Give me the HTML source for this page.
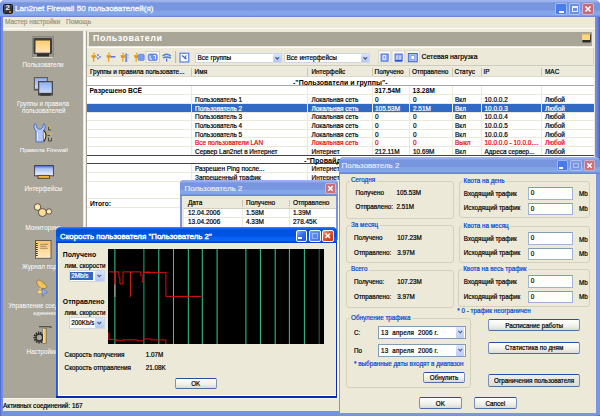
<!DOCTYPE html>
<html><head><meta charset="utf-8">
<style>
*{margin:0;padding:0;box-sizing:border-box}
html,body{width:600px;height:416px;overflow:hidden;background:#fff;font-family:"Liberation Sans",sans-serif;color:#000}
.a{position:absolute}
.t{position:absolute;white-space:nowrap;line-height:1;-webkit-text-stroke:0.2px currentColor}
</style></head><body>
<div class="a" style="left:0px;top:0px;width:600px;height:416px;background:linear-gradient(90deg,#4d5fcf,#6f8de0 1.5px,#7391e2 3px,#7391e2 595px,#6a80da 597.5px,#4a58c6 600px);border-radius:5px 5px 0 0"></div>
<div class="a" style="left:0px;top:0px;width:600px;height:16.8px;background:linear-gradient(#a2b6ee,#9ab0ea 10%,#7896e0 17%,#7896e0 60%,#82a6e8 66%,#82a6e8 90%,#6a84e0 94%);border-radius:5px 5px 0 0"></div>
<div class="a" style="left:3px;top:4px;width:10px;height:10px;background:linear-gradient(135deg,#555,#222);border-radius:1.5px;border:0.5px solid #1a1a1a"></div>
<div class="t" style="left:5.4px;top:4.34px;font-size:8px;font-weight:bold;-webkit-text-stroke:0;color:#f4f4f4">2</div>
<div class="a" style="left:9.3px;top:10.6px;width:2.2px;height:2.2px;background:#f0a020;border-radius:1px"></div>
<div class="t" style="left:15px;top:4.92px;font-size:8.1px;color:#f2f5fd;-webkit-text-stroke:0.35px #f2f5fd">Lan2net Firewall 50 пользователей(я)</div>
<div class="a" style="left:555px;top:3px;width:11.5px;height:11.5px;background:#4a7cec;border:1px solid rgba(220,230,255,.6);border-radius:2px"></div>
<div class="a" style="left:568.5px;top:3px;width:11.5px;height:11.5px;background:#6a8fe8;border:1px solid rgba(220,230,255,.6);border-radius:2px"></div>
<div class="a" style="left:582px;top:3px;width:11.5px;height:11.5px;background:#c66a7a;border:1px solid rgba(220,230,255,.6);border-radius:2px"></div>
<div class="a" style="left:558.5px;top:10.5px;width:5px;height:2px;background:#fff"></div>
<div class="a" style="left:571.5px;top:6px;width:6px;height:5.5px;border:1px solid #e8eefc;border-top-width:2px"></div>
<svg class="a" style="left:582px;top:3px" width="12" height="12"><path d="M3.5 3.5L8.5 8.5M8.5 3.5L3.5 8.5" stroke="#fff" stroke-width="1.6"/></svg>
<div class="a" style="left:3px;top:16.5px;width:591.8px;height:13px;background:#ece9d8"></div>
<div class="t" style="left:5px;top:19.27px;font-size:6.5px;color:#97948a">Мастер настройки</div>
<div class="t" style="left:66px;top:19.27px;font-size:6.5px;color:#97948a">Помощь</div>
<div class="a" style="left:3px;top:28.2px;width:591.8px;height:1px;background:#fff"></div>
<div class="a" style="left:3px;top:29.2px;width:591.8px;height:381.6px;background:#ece9d8"></div>
<div class="a" style="left:3px;top:30.5px;width:79.5px;height:368px;background:#a9a598"></div>
<div class="a" style="left:84px;top:30.5px;width:1px;height:368px;background:#fff"></div>
<div class="a" style="left:86px;top:30.5px;width:1px;height:368px;background:#aca899"></div>
<div class="a" style="left:89px;top:31.5px;width:503px;height:14.5px;background:#aaa697"></div>
<div class="t" style="left:93px;top:33.79px;font-size:8.9px;font-weight:bold;-webkit-text-stroke:0;color:#fff;letter-spacing:0.55px">Пользователи</div>
<svg class="a" style="left:580px;top:32px" width="14" height="13" viewBox="580 32 14 13"><rect x="582" y="34.5" width="8.2" height="5.5" fill="#ffd77e"/><path d="M582 34.2 h2.2 M585.2 34.2 h2.2 M588.2 34.2 h2" stroke="#f5c060" stroke-width="1"/><rect x="582.4" y="40" width="7.8" height="2.6" fill="#2a2a2a" rx=".6"/><rect x="590.1" y="34.2" width="1" height="8" fill="#333"/></svg>
<div class="a" style="left:87px;top:47.3px;width:506px;height:1px;background:#fff"></div>
<div class="a" style="left:3px;top:398px;width:591.8px;height:12.8px;background:#ece9d8;border-top:1.5px solid #f4f3ee"></div>
<div class="t" style="left:3px;top:402.99px;font-size:6.4px;">Активных соединений: 167</div>
<div class="a" style="left:195px;top:52.5px;width:87px;height:10.5px;background:#fff;border:1px solid #cdd6e3"></div>
<div class="t" style="left:197.5px;top:54.53px;font-size:6.45px;">Все группы</div>
<div class="a" style="left:272.5px;top:53.5px;width:8.5px;height:8.5px;background:linear-gradient(#d8e4fb,#b4c8f4);border-radius:1px"></div>
<svg class="a" style="left:272.5px;top:53.5px" width="8.5" height="8.5"><path d="M2.4 3.25L4.25 5.05L6.1 3.25" fill="none" stroke="#4d6185" stroke-width="1.2"/></svg>
<div class="a" style="left:284px;top:52.5px;width:86px;height:10.5px;background:#fff;border:1px solid #cdd6e3"></div>
<div class="t" style="left:286.5px;top:54.53px;font-size:6.45px;">Все интерфейсы</div>
<div class="a" style="left:360.5px;top:53.5px;width:8.5px;height:8.5px;background:linear-gradient(#d8e4fb,#b4c8f4);border-radius:1px"></div>
<svg class="a" style="left:360.5px;top:53.5px" width="8.5" height="8.5"><path d="M2.4 3.25L4.25 5.05L6.1 3.25" fill="none" stroke="#4d6185" stroke-width="1.2"/></svg>
<div class="t" style="left:421.5px;top:54.41px;font-size:6.9px;">Сетевая нагрузка</div>
<div class="a" style="left:175px;top:51px;width:1px;height:12px;background:#c5c2b2"></div>
<div class="a" style="left:593px;top:48px;width:1px;height:16px;background:#d4d0c0"></div>
<div class="a" style="left:87px;top:66px;width:506.5px;height:332px;background:#fff"></div>
<div class="a" style="left:87px;top:65.2px;width:506.5px;height:1px;background:#cfccbd"></div>
<div class="a" style="left:87px;top:66.2px;width:506.5px;height:10.8px;background:#ebeadb;border-bottom:1px solid #dcd9ca"></div>
<div class="a" style="left:191.4px;top:68px;width:1px;height:8px;background:#c7c5b2"></div>
<div class="a" style="left:307.4px;top:68px;width:1px;height:8px;background:#c7c5b2"></div>
<div class="a" style="left:372px;top:68px;width:1px;height:8px;background:#c7c5b2"></div>
<div class="a" style="left:409.4px;top:68px;width:1px;height:8px;background:#c7c5b2"></div>
<div class="a" style="left:451.6px;top:68px;width:1px;height:8px;background:#c7c5b2"></div>
<div class="a" style="left:480.6px;top:68px;width:1px;height:8px;background:#c7c5b2"></div>
<div class="a" style="left:541.4px;top:68px;width:1px;height:8px;background:#c7c5b2"></div>
<div class="t" style="left:90px;top:69.28px;font-size:6.45px;">Группы и правила пользовате...</div>
<div class="t" style="left:194.6px;top:69.28px;font-size:6.45px;">Имя</div>
<div class="t" style="left:311.4px;top:69.28px;font-size:6.45px;">Интерфейс</div>
<div class="t" style="left:374.5px;top:69.28px;font-size:6.45px;">Получено</div>
<div class="t" style="left:412px;top:69.28px;font-size:6.45px;">Отправлено</div>
<div class="t" style="left:454.5px;top:69.28px;font-size:6.45px;">Статус</div>
<div class="t" style="left:483.5px;top:69.28px;font-size:6.45px;">IP</div>
<div class="t" style="left:545px;top:69.28px;font-size:6.45px;">MAC</div>
<div class="a" style="left:87px;top:85.4px;width:506.5px;height:1px;background:#a8a8a8"></div>
<div class="t" style="left:293px;top:79.49px;font-size:7.0px;font-weight:bold;-webkit-text-stroke:0;">-"Пользователи и группы"-</div>
<div class="a" style="left:87px;top:94.32000000000001px;width:506.5px;height:1px;background:#ece9d8"></div>
<div class="a" style="left:191.4px;top:86.2px;width:1px;height:8.62px;background:#ece9d8"></div>
<div class="a" style="left:307.4px;top:86.2px;width:1px;height:8.62px;background:#ece9d8"></div>
<div class="a" style="left:372px;top:86.2px;width:1px;height:8.62px;background:#ece9d8"></div>
<div class="a" style="left:409.4px;top:86.2px;width:1px;height:8.62px;background:#ece9d8"></div>
<div class="a" style="left:451.6px;top:86.2px;width:1px;height:8.62px;background:#ece9d8"></div>
<div class="a" style="left:480.6px;top:86.2px;width:1px;height:8.62px;background:#ece9d8"></div>
<div class="a" style="left:541.4px;top:86.2px;width:1px;height:8.62px;background:#ece9d8"></div>
<div class="t" style="left:89.5px;top:88.14px;font-size:6.7px;font-weight:bold;-webkit-text-stroke:0;color:#000">Разрешено ВСЁ</div>
<div class="t" style="left:374.5px;top:88.14px;font-size:6.7px;font-weight:bold;-webkit-text-stroke:0;color:#000">317.54M</div>
<div class="t" style="left:412.5px;top:88.14px;font-size:6.7px;font-weight:bold;-webkit-text-stroke:0;color:#000">13.28M</div>
<div class="a" style="left:87px;top:102.94000000000001px;width:506.5px;height:1px;background:#ece9d8"></div>
<div class="a" style="left:191.4px;top:94.82000000000001px;width:1px;height:8.62px;background:#ece9d8"></div>
<div class="a" style="left:307.4px;top:94.82000000000001px;width:1px;height:8.62px;background:#ece9d8"></div>
<div class="a" style="left:372px;top:94.82000000000001px;width:1px;height:8.62px;background:#ece9d8"></div>
<div class="a" style="left:409.4px;top:94.82000000000001px;width:1px;height:8.62px;background:#ece9d8"></div>
<div class="a" style="left:451.6px;top:94.82000000000001px;width:1px;height:8.62px;background:#ece9d8"></div>
<div class="a" style="left:480.6px;top:94.82000000000001px;width:1px;height:8.62px;background:#ece9d8"></div>
<div class="a" style="left:541.4px;top:94.82000000000001px;width:1px;height:8.62px;background:#ece9d8"></div>
<div class="t" style="left:195px;top:97.20px;font-size:6.45px;color:#000">Пользователь 1</div>
<div class="t" style="left:311.5px;top:97.20px;font-size:6.45px;color:#000">Локальная сеть</div>
<div class="t" style="left:375px;top:97.20px;font-size:6.45px;color:#000">0</div>
<div class="t" style="left:413px;top:97.20px;font-size:6.45px;color:#000">0</div>
<div class="t" style="left:455px;top:97.20px;font-size:6.45px;color:#000">Вкл</div>
<div class="t" style="left:484.5px;top:97.20px;font-size:6.45px;color:#000">10.0.0.2</div>
<div class="t" style="left:545px;top:97.20px;font-size:6.45px;color:#000">Любой</div>
<div class="a" style="left:87px;top:103.64px;width:506.5px;height:8.219999999999999px;background:#316ac5"></div>
<div class="a" style="left:87px;top:111.56px;width:506.5px;height:1px;background:#ece9d8"></div>
<div class="a" style="left:191.4px;top:103.44px;width:1px;height:8.62px;background:#ece9d8"></div>
<div class="a" style="left:307.4px;top:103.44px;width:1px;height:8.62px;background:#ece9d8"></div>
<div class="a" style="left:372px;top:103.44px;width:1px;height:8.62px;background:#ece9d8"></div>
<div class="a" style="left:409.4px;top:103.44px;width:1px;height:8.62px;background:#ece9d8"></div>
<div class="a" style="left:451.6px;top:103.44px;width:1px;height:8.62px;background:#ece9d8"></div>
<div class="a" style="left:480.6px;top:103.44px;width:1px;height:8.62px;background:#ece9d8"></div>
<div class="a" style="left:541.4px;top:103.44px;width:1px;height:8.62px;background:#ece9d8"></div>
<div class="t" style="left:195px;top:105.82px;font-size:6.45px;color:#fff">Пользователь 2</div>
<div class="t" style="left:311.5px;top:105.82px;font-size:6.45px;color:#fff">Локальная сеть</div>
<div class="t" style="left:375px;top:105.82px;font-size:6.45px;color:#fff">105.53M</div>
<div class="t" style="left:413px;top:105.82px;font-size:6.45px;color:#fff">2.51M</div>
<div class="t" style="left:455px;top:105.82px;font-size:6.45px;color:#fff">Вкл</div>
<div class="t" style="left:484.5px;top:105.82px;font-size:6.45px;color:#fff">10.0.0.3</div>
<div class="t" style="left:545px;top:105.82px;font-size:6.45px;color:#fff">Любой</div>
<div class="a" style="left:87px;top:120.18px;width:506.5px;height:1px;background:#ece9d8"></div>
<div class="a" style="left:191.4px;top:112.06px;width:1px;height:8.62px;background:#ece9d8"></div>
<div class="a" style="left:307.4px;top:112.06px;width:1px;height:8.62px;background:#ece9d8"></div>
<div class="a" style="left:372px;top:112.06px;width:1px;height:8.62px;background:#ece9d8"></div>
<div class="a" style="left:409.4px;top:112.06px;width:1px;height:8.62px;background:#ece9d8"></div>
<div class="a" style="left:451.6px;top:112.06px;width:1px;height:8.62px;background:#ece9d8"></div>
<div class="a" style="left:480.6px;top:112.06px;width:1px;height:8.62px;background:#ece9d8"></div>
<div class="a" style="left:541.4px;top:112.06px;width:1px;height:8.62px;background:#ece9d8"></div>
<div class="t" style="left:195px;top:114.44px;font-size:6.45px;color:#000">Пользователь 3</div>
<div class="t" style="left:311.5px;top:114.44px;font-size:6.45px;color:#000">Локальная сеть</div>
<div class="t" style="left:375px;top:114.44px;font-size:6.45px;color:#000">0</div>
<div class="t" style="left:413px;top:114.44px;font-size:6.45px;color:#000">0</div>
<div class="t" style="left:455px;top:114.44px;font-size:6.45px;color:#000">Вкл</div>
<div class="t" style="left:484.5px;top:114.44px;font-size:6.45px;color:#000">10.0.0.4</div>
<div class="t" style="left:545px;top:114.44px;font-size:6.45px;color:#000">Любой</div>
<div class="a" style="left:87px;top:128.8px;width:506.5px;height:1px;background:#ece9d8"></div>
<div class="a" style="left:191.4px;top:120.68px;width:1px;height:8.62px;background:#ece9d8"></div>
<div class="a" style="left:307.4px;top:120.68px;width:1px;height:8.62px;background:#ece9d8"></div>
<div class="a" style="left:372px;top:120.68px;width:1px;height:8.62px;background:#ece9d8"></div>
<div class="a" style="left:409.4px;top:120.68px;width:1px;height:8.62px;background:#ece9d8"></div>
<div class="a" style="left:451.6px;top:120.68px;width:1px;height:8.62px;background:#ece9d8"></div>
<div class="a" style="left:480.6px;top:120.68px;width:1px;height:8.62px;background:#ece9d8"></div>
<div class="a" style="left:541.4px;top:120.68px;width:1px;height:8.62px;background:#ece9d8"></div>
<div class="t" style="left:195px;top:123.06px;font-size:6.45px;color:#000">Пользователь 4</div>
<div class="t" style="left:311.5px;top:123.06px;font-size:6.45px;color:#000">Локальная сеть</div>
<div class="t" style="left:375px;top:123.06px;font-size:6.45px;color:#000">0</div>
<div class="t" style="left:413px;top:123.06px;font-size:6.45px;color:#000">0</div>
<div class="t" style="left:455px;top:123.06px;font-size:6.45px;color:#000">Вкл</div>
<div class="t" style="left:484.5px;top:123.06px;font-size:6.45px;color:#000">10.0.0.5</div>
<div class="t" style="left:545px;top:123.06px;font-size:6.45px;color:#000">Любой</div>
<div class="a" style="left:87px;top:137.42000000000002px;width:506.5px;height:1px;background:#ece9d8"></div>
<div class="a" style="left:191.4px;top:129.3px;width:1px;height:8.62px;background:#ece9d8"></div>
<div class="a" style="left:307.4px;top:129.3px;width:1px;height:8.62px;background:#ece9d8"></div>
<div class="a" style="left:372px;top:129.3px;width:1px;height:8.62px;background:#ece9d8"></div>
<div class="a" style="left:409.4px;top:129.3px;width:1px;height:8.62px;background:#ece9d8"></div>
<div class="a" style="left:451.6px;top:129.3px;width:1px;height:8.62px;background:#ece9d8"></div>
<div class="a" style="left:480.6px;top:129.3px;width:1px;height:8.62px;background:#ece9d8"></div>
<div class="a" style="left:541.4px;top:129.3px;width:1px;height:8.62px;background:#ece9d8"></div>
<div class="t" style="left:195px;top:131.68px;font-size:6.45px;color:#000">Пользователь 5</div>
<div class="t" style="left:311.5px;top:131.68px;font-size:6.45px;color:#000">Локальная сеть</div>
<div class="t" style="left:375px;top:131.68px;font-size:6.45px;color:#000">0</div>
<div class="t" style="left:413px;top:131.68px;font-size:6.45px;color:#000">0</div>
<div class="t" style="left:455px;top:131.68px;font-size:6.45px;color:#000">Вкл</div>
<div class="t" style="left:484.5px;top:131.68px;font-size:6.45px;color:#000">10.0.0.6</div>
<div class="t" style="left:545px;top:131.68px;font-size:6.45px;color:#000">Любой</div>
<div class="a" style="left:87px;top:146.04000000000002px;width:506.5px;height:1px;background:#ece9d8"></div>
<div class="a" style="left:191.4px;top:137.92000000000002px;width:1px;height:8.62px;background:#ece9d8"></div>
<div class="a" style="left:307.4px;top:137.92000000000002px;width:1px;height:8.62px;background:#ece9d8"></div>
<div class="a" style="left:372px;top:137.92000000000002px;width:1px;height:8.62px;background:#ece9d8"></div>
<div class="a" style="left:409.4px;top:137.92000000000002px;width:1px;height:8.62px;background:#ece9d8"></div>
<div class="a" style="left:451.6px;top:137.92000000000002px;width:1px;height:8.62px;background:#ece9d8"></div>
<div class="a" style="left:480.6px;top:137.92000000000002px;width:1px;height:8.62px;background:#ece9d8"></div>
<div class="a" style="left:541.4px;top:137.92000000000002px;width:1px;height:8.62px;background:#ece9d8"></div>
<div class="t" style="left:195px;top:140.30px;font-size:6.45px;color:#e80000">Все пользователи LAN</div>
<div class="t" style="left:311.5px;top:140.30px;font-size:6.45px;color:#e80000">Локальная сеть</div>
<div class="t" style="left:375px;top:140.30px;font-size:6.45px;color:#e80000">0</div>
<div class="t" style="left:413px;top:140.30px;font-size:6.45px;color:#e80000">0</div>
<div class="t" style="left:455px;top:140.30px;font-size:6.45px;color:#e80000">Выкл</div>
<div class="t" style="left:484.5px;top:140.30px;font-size:6.45px;color:#e80000">10.0.0.0 - 10.0.0....</div>
<div class="t" style="left:545px;top:140.30px;font-size:6.45px;color:#e80000">Любой</div>
<div class="a" style="left:87px;top:154.66px;width:506.5px;height:1px;background:#ece9d8"></div>
<div class="a" style="left:191.4px;top:146.54px;width:1px;height:8.62px;background:#ece9d8"></div>
<div class="a" style="left:307.4px;top:146.54px;width:1px;height:8.62px;background:#ece9d8"></div>
<div class="a" style="left:372px;top:146.54px;width:1px;height:8.62px;background:#ece9d8"></div>
<div class="a" style="left:409.4px;top:146.54px;width:1px;height:8.62px;background:#ece9d8"></div>
<div class="a" style="left:451.6px;top:146.54px;width:1px;height:8.62px;background:#ece9d8"></div>
<div class="a" style="left:480.6px;top:146.54px;width:1px;height:8.62px;background:#ece9d8"></div>
<div class="a" style="left:541.4px;top:146.54px;width:1px;height:8.62px;background:#ece9d8"></div>
<div class="t" style="left:195px;top:148.92px;font-size:6.45px;color:#000">Сервер Lan2net в Интернет</div>
<div class="t" style="left:311.5px;top:148.92px;font-size:6.45px;color:#000">Интернет</div>
<div class="t" style="left:375px;top:148.92px;font-size:6.45px;color:#000">212.11M</div>
<div class="t" style="left:413px;top:148.92px;font-size:6.45px;color:#000">10.69M</div>
<div class="t" style="left:455px;top:148.92px;font-size:6.45px;color:#000">Вкл</div>
<div class="t" style="left:484.5px;top:148.92px;font-size:6.45px;color:#000">Адреса сервер...</div>
<div class="t" style="left:545px;top:148.92px;font-size:6.45px;color:#000">Любой</div>
<div class="a" style="left:87px;top:154.8px;width:506.5px;height:1.3px;background:#444"></div>
<div class="a" style="left:87px;top:162.8px;width:506.5px;height:1.3px;background:#444"></div>
<div class="t" style="left:304px;top:156.66px;font-size:7.2px;font-weight:bold;-webkit-text-stroke:0;">-"Провайдеры"-</div>
<div class="a" style="left:87px;top:172.2px;width:506.5px;height:1px;background:#ece9d8"></div>
<div class="a" style="left:191.4px;top:164px;width:1px;height:8.6px;background:#ece9d8"></div>
<div class="a" style="left:307.4px;top:164px;width:1px;height:8.6px;background:#ece9d8"></div>
<div class="a" style="left:372px;top:164px;width:1px;height:8.6px;background:#ece9d8"></div>
<div class="a" style="left:409.4px;top:164px;width:1px;height:8.6px;background:#ece9d8"></div>
<div class="a" style="left:451.6px;top:164px;width:1px;height:8.6px;background:#ece9d8"></div>
<div class="a" style="left:480.6px;top:164px;width:1px;height:8.6px;background:#ece9d8"></div>
<div class="a" style="left:541.4px;top:164px;width:1px;height:8.6px;background:#ece9d8"></div>
<div class="t" style="left:195px;top:166.28px;font-size:6.45px;">Разрешен Ping после...</div>
<div class="t" style="left:311.5px;top:166.28px;font-size:6.45px;">Интернет</div>
<div class="a" style="left:87px;top:180.7px;width:506.5px;height:1px;background:#ece9d8"></div>
<div class="a" style="left:191.4px;top:172.5px;width:1px;height:8.6px;background:#ece9d8"></div>
<div class="a" style="left:307.4px;top:172.5px;width:1px;height:8.6px;background:#ece9d8"></div>
<div class="a" style="left:372px;top:172.5px;width:1px;height:8.6px;background:#ece9d8"></div>
<div class="a" style="left:409.4px;top:172.5px;width:1px;height:8.6px;background:#ece9d8"></div>
<div class="a" style="left:451.6px;top:172.5px;width:1px;height:8.6px;background:#ece9d8"></div>
<div class="a" style="left:480.6px;top:172.5px;width:1px;height:8.6px;background:#ece9d8"></div>
<div class="a" style="left:541.4px;top:172.5px;width:1px;height:8.6px;background:#ece9d8"></div>
<div class="t" style="left:195px;top:174.78px;font-size:6.45px;">Запрещенный трафик</div>
<div class="t" style="left:311.5px;top:174.78px;font-size:6.45px;">Интернет</div>
<div class="a" style="left:191.4px;top:181px;width:1px;height:26px;background:#ece9d8"></div>
<div class="a" style="left:307.4px;top:181px;width:1px;height:26px;background:#ece9d8"></div>
<div class="a" style="left:372px;top:181px;width:1px;height:26px;background:#ece9d8"></div>
<div class="a" style="left:409.4px;top:181px;width:1px;height:26px;background:#ece9d8"></div>
<div class="a" style="left:451.6px;top:181px;width:1px;height:26px;background:#ece9d8"></div>
<div class="a" style="left:480.6px;top:181px;width:1px;height:26px;background:#ece9d8"></div>
<div class="a" style="left:541.4px;top:181px;width:1px;height:26px;background:#ece9d8"></div>
<div class="a" style="left:87px;top:197.8px;width:506.5px;height:1px;background:#ece9d8"></div>
<div class="a" style="left:87px;top:206.6px;width:506.5px;height:1px;background:#ece9d8"></div>
<div class="t" style="left:90px;top:200.54px;font-size:6.7px;font-weight:bold;-webkit-text-stroke:0;">Итого:</div>
<svg class="a" style="left:86px;top:47px" width="110" height="18" viewBox="86 47 110 18"><path d="M93.2 52.8 h1.6 v1.8 h-1.6z" fill="#e9a020"/><path d="M91.3 55.0 h5 l-1 3 h-1 v3.8 h-1.4 v-3.8 h-1 z" fill="#eba526"/><path d="M92.5 55.8 l1.4 1.6 l1.4 -1.6" fill="none" stroke="#c97b10" stroke-width=".6"/><circle cx="98" cy="55" r=".9" fill="#5a7ee8"/><circle cx="100" cy="57" r=".9" fill="#5a7ee8"/><circle cx="98" cy="58.5" r=".9" fill="#5a7ee8"/><circle cx="96.6" cy="57" r=".8" fill="#8aa6f0"/><path d="M108.2 52.8 h1.6 v1.8 h-1.6z" fill="#e9a020"/><path d="M106.3 55.0 h5 l-1 3 h-1 v3.8 h-1.4 v-3.8 h-1 z" fill="#eba526"/><path d="M107.5 55.8 l1.4 1.6 l1.4 -1.6" fill="none" stroke="#c97b10" stroke-width=".6"/><rect x="110.5" y="56" width="5" height="1.6" fill="#5a80e8"/><path d="M122.4 52.8 h1.6 v1.8 h-1.6z" fill="#e9a020"/><path d="M120.5 55.0 h5 l-1 3 h-1 v3.8 h-1.4 v-3.8 h-1 z" fill="#eba526"/><path d="M121.7 55.8 l1.4 1.6 l1.4 -1.6" fill="none" stroke="#c97b10" stroke-width=".6"/><path d="M126.2 53.5 v8.5" stroke="#6a8ff0" stroke-width="2"/><path d="M127.5 55 h1.4 M127.5 57.5 h1.4" stroke="#9ab3f5" stroke-width="1"/><path d="M135.79999999999998 52.8 h1.6 v1.8 h-1.6z" fill="#e9a020"/><path d="M133.9 55.0 h5 l-1 3 h-1 v3.8 h-1.4 v-3.8 h-1 z" fill="#eba526"/><path d="M135.1 55.8 l1.4 1.6 l1.4 -1.6" fill="none" stroke="#c97b10" stroke-width=".6"/><rect x="138.2" y="54.2" width="6" height="6.2" rx="1.2" fill="#7a9cf0" stroke="#4d73e0" stroke-width=".6"/><rect x="146" y="51.3" width="13.3" height="11.4" fill="#f6f4ec" stroke="#c2bfae" stroke-width=".6"/><rect x="148.2" y="54" width="9" height="6.6" rx="1.5" fill="#6f93ee" stroke="#3f66d8" stroke-width=".6"/><path d="M150 55.5 v3.6 h2 M153.5 55.5 h2 v3.6" fill="none" stroke="#fff" stroke-width=".9"/><path d="M162.5 56 q4 -3.5 8.5 0 M163 58 q3.7 -2 7.8 0" fill="none" stroke="#4f78e6" stroke-width="1.4"/><path d="M166.7 58.5 v3" stroke="#3a60d0" stroke-width="1.1"/><rect x="175.3" y="51" width=".9" height="12" fill="#bdbaa8"/><rect x="180" y="53.2" width="8.8" height="8.8" fill="#fff" stroke="#4d73e0" stroke-width="1.1"/><path d="M182 55.5 l4.5 3.5 M186.5 55.5 l-2 2.5 l2 1" fill="none" stroke="#3a5fd0" stroke-width="1.1"/></svg>
<svg class="a" style="left:376px;top:49px" width="46" height="16" viewBox="376 49 46 16"><rect x="378.3" y="50.8" width="12.4" height="12" fill="#f7f5ee" stroke="#cfccbc" stroke-width=".6"/><rect x="392" y="50.8" width="12.5" height="12" fill="#f7f5ee" stroke="#cfccbc" stroke-width=".6"/><rect x="406" y="50.8" width="13.5" height="12" fill="#f7f5ee" stroke="#cfccbc" stroke-width=".6"/><rect x="381" y="54" width="7.2" height="7.2" fill="#8aa8f2" stroke="#3f66d8" stroke-width=".8"/><path d="M383 55.5 v4 h2.5 v-4z" fill="none" stroke="#fff" stroke-width=".8"/><rect x="395" y="54" width="7.2" height="7.2" fill="#8aa8f2" stroke="#3f66d8" stroke-width=".8"/><path d="M397 55.5 v4 M400 55.5 v4" stroke="#fff" stroke-width=".9"/><rect x="395" y="60" width="7.2" height="1.3" fill="#2a50c8"/><rect x="408.3" y="53.5" width="9" height="8.2" fill="#a9bef5" stroke="#3f66d8" stroke-width="1"/><rect x="411" y="55.5" width="3.6" height="4.2" fill="#fff" stroke="#5a80e8" stroke-width=".6"/></svg>
<div class="a" style="left:31.7px;top:36px;width:22.2px;height:22.4px;background:#9a968a;border:1px solid #8a877b;border-bottom:1px solid #d8d5c8"></div>
<svg class="a" style="left:32px;top:36px" width="22" height="22">
<defs><linearGradient id="g1" x1="0" y1="0" x2="0" y2="1"><stop offset="0" stop-color="#ffcc70"/><stop offset="1" stop-color="#ffe6b6"/></linearGradient></defs>
<rect x="1.5" y="2" width="18.5" height="16" fill="#3f3f3f" rx="1"/>
<rect x="3.5" y="4.5" width="14.5" height="12" fill="url(#g1)"/>
<rect x="3.5" y="15.5" width="14.5" height="1" fill="#ffc8c0"/>
<rect x="5" y="18" width="12" height="2.5" fill="#2e2e2e"/>
</svg>
<div class="t" style="left:22.5px;top:62.20px;font-size:6.3px;color:#fff;-webkit-text-stroke:0">Пользователи</div>
<svg class="a" style="left:33px;top:76px" width="22" height="22">
<defs><linearGradient id="g2" x1="0" y1="0" x2="0" y2="1"><stop offset="0" stop-color="#8fb2f4"/><stop offset="1" stop-color="#c8daf8"/></linearGradient></defs>
<rect x="0.8" y="1" width="14.2" height="13.7" fill="#5d5d5d"/>
<rect x="2" y="2.2" width="11.8" height="10.5" fill="url(#g2)"/>
<rect x="5" y="5" width="15" height="14.5" fill="#4a4a4a"/>
<rect x="6.3" y="6.3" width="12.4" height="10.5" fill="url(#g2)"/>
<rect x="7.5" y="17.5" width="10" height="2.2" fill="#333"/>
</svg>
<div class="t" style="left:16.9px;top:101.30px;font-size:6.3px;color:#fff;-webkit-text-stroke:0;letter-spacing:-0.02px">Группы и правила</div>
<div class="t" style="left:22px;top:108.30px;font-size:6.3px;color:#fff;-webkit-text-stroke:0">пользователей</div>
<svg class="a" style="left:30px;top:120px" width="26" height="26" viewBox="30 120 26 26">
<path d="M34.6 123.8 C33.6 125.5 33.6 128.5 36 131.2 L36 141.9 L43.4 141.9 L43.4 131.2 C45.6 128.5 45.6 125.5 44.3 123.8 L43.2 124.3 C43.3 127.3 42 129.3 39.8 129.3 C37.6 129.3 36.3 127.3 36.2 124.3 Z" fill="#b6c9f5" stroke="#3f5fc0" stroke-width="0.8"/>
<path d="M37.5 132 V140.5" stroke="#fff" stroke-width="0.9" opacity=".8"/>
<path d="M43.4 130.5 C46.5 132 47 137 44 141.5" fill="#f4e0b0" stroke="#222" stroke-width="1.1"/>
<path d="M48.5 127 V130 H51 M47.5 135.5 H50 M48.5 137.5 V141 H51.5 V138" fill="none" stroke="#333" stroke-width="0.8"/>
<circle cx="50.2" cy="127.5" r="1" fill="#f2a820"/><circle cx="50.6" cy="133.6" r="1.1" fill="#f2b030"/>
</svg>
<div class="t" style="left:19.7px;top:146.82px;font-size:6.2px;color:#fff;-webkit-text-stroke:0">Правила Firewall</div>
<svg class="a" style="left:34px;top:165px" width="20" height="14">
<defs><linearGradient id="g4" x1="0" y1="0" x2="0" y2="1"><stop offset="0" stop-color="#3a66e0"/><stop offset="0.3" stop-color="#a9c0f2"/><stop offset="1" stop-color="#f4f6ff"/></linearGradient></defs>
<rect x="0.6" y="0.6" width="18.8" height="10.2" fill="url(#g4)" stroke="#3a3a3a" stroke-width="0.9"/>
<rect x="4" y="10.3" width="11.5" height="3" fill="#f3b640" stroke="#333" stroke-width="0.8"/>
</svg>
<div class="t" style="left:24.5px;top:185.80px;font-size:6.3px;color:#fff;-webkit-text-stroke:0">Интерфейсы</div>
<svg class="a" style="left:32px;top:201px" width="22" height="18">
<circle cx="5.5" cy="6" r="3.3" fill="#ffe7b0" stroke="#3a3a3a" stroke-width="0.8"/>
<circle cx="17" cy="10.5" r="2.7" fill="#ffe7b0" stroke="#3a3a3a" stroke-width="0.8"/>
<circle cx="10.4" cy="11.5" r="4" fill="#ffdb95" stroke="#3a3a3a" stroke-width="0.8"/>
</svg>
<div class="t" style="left:25.5px;top:224.60px;font-size:6.3px;color:#fff;-webkit-text-stroke:0">Мониторинг</div>
<svg class="a" style="left:35px;top:240px" width="17" height="19">
<defs><linearGradient id="g6" x1="0" y1="0" x2="0" y2="1"><stop offset="0" stop-color="#ffc760"/><stop offset="1" stop-color="#ffeac4"/></linearGradient></defs>
<rect x="0.5" y="0.5" width="15.5" height="17.8" fill="url(#g6)" stroke="#555" stroke-width="0.9"/>
<path d="M1.8 3 V17" stroke="#333" stroke-width="1.8" stroke-dasharray="1,1"/>
<path d="M5.2 4.3 H13.2 M5.2 6.3 H11.5 M5.2 8.3 H12.5" stroke="#4a4a4a" stroke-width="0.55"/><path d="M11.5 8.3 H13" stroke="#e08080" stroke-width="0.6"/>
</svg>
<div class="t" style="left:22px;top:263.80px;font-size:6.3px;color:#fff;-webkit-text-stroke:0">Журнал подключений</div>
<svg class="a" style="left:30px;top:276px" width="24" height="24" viewBox="30 276 24 24">
<path d="M38.2 280.2 C39.5 279.8 40.5 280.8 41.5 281.3 L46 285.2 C47.3 286.5 46.8 288.5 44.8 288.5 L41 288.3 C39.5 287.8 38.5 286 37.3 284.2 C36.3 282.6 36.6 280.8 38.2 280.2 Z" fill="#f5c356" stroke="#5a5040" stroke-width="0.5"/>
<path d="M39.3 288 h1.8 v2.5 h-1.8z" fill="#f2c060"/>
<ellipse cx="39.8" cy="292" rx="2.8" ry="1.9" fill="#ffd37a" stroke="#6a6050" stroke-width="0.4"/>
<path d="M42.2 288.6 L44.5 290 L47.6 292.5 L44.5 293.5 L43 296.5 L42.2 294 Z" fill="#90b0f5" stroke="#4a5a8a" stroke-width="0.45"/>
</svg>
<div class="t" style="left:8.4px;top:302.80px;font-size:6.3px;color:#fff;-webkit-text-stroke:0">Управление соединениями</div>
<div class="t" style="left:33.2px;top:311.32px;font-size:5.6px;color:#fff;-webkit-text-stroke:0">единения</div>
<svg class="a" style="left:30px;top:322px" width="24" height="26" viewBox="30 322 24 26">
<circle cx="39.3" cy="337.5" r="4.6" fill="none" stroke="#262626" stroke-width="2.6" stroke-dasharray="1.3,0.9"/>
<circle cx="39.3" cy="337.5" r="3.3" fill="none" stroke="#2a2a2a" stroke-width="1.3"/>
<rect x="43" y="328.5" width="3.2" height="14.8" fill="#f1bd4a" stroke="#555" stroke-width="0.5"/>
<rect x="43.3" y="328.5" width="1" height="14.5" fill="#fff3c8"/>
<path d="M39 326.8 H50.5 L51.5 328" fill="none" stroke="#3a3a3a" stroke-width="1.1"/>
</svg>
<div class="t" style="left:26.5px;top:348.50px;font-size:6.3px;color:#fff;-webkit-text-stroke:0">Настройки</div>
<div class="a" style="left:180px;top:179.5px;width:158px;height:60px;background:#7a96df;border-radius:4px 4px 0 0"></div>
<div class="a" style="left:180px;top:179.5px;width:158px;height:16.5px;background:linear-gradient(#a2b6ee,#92aaea 12%,#7896e0 18%,#7896e0 58%,#82a6e8 64%,#82a6e8 88%,#6a84e0 93%);border-radius:4px 4px 0 0"></div>
<div class="t" style="left:184.5px;top:185.35px;font-size:7.9px;color:#e4eafa;-webkit-text-stroke:0.2px #e4eafa">Пользователь 2</div>
<div class="a" style="left:325px;top:183px;width:11px;height:11px;background:#c8707c;border:1px solid rgba(220,230,255,.55);border-radius:2px"></div>
<svg class="a" style="left:325px;top:183px" width="11" height="11"><path d="M3.3 3.3L7.699999999999999 7.699999999999999M7.699999999999999 3.3L3.3 7.699999999999999" stroke="#fff" stroke-width="1.6"/></svg>
<div class="a" style="left:182px;top:196px;width:154px;height:40px;background:#ece9d8"></div>
<div class="a" style="left:184px;top:198.5px;width:152px;height:30px;background:#fff"></div>
<div class="a" style="left:184px;top:198.5px;width:152px;height:10px;background:#ebeadb;border-bottom:1px solid #d2cfbf"></div>
<div class="a" style="left:242.3px;top:200px;width:1px;height:7px;background:#c7c5b2"></div>
<div class="a" style="left:288.5px;top:200px;width:1px;height:7px;background:#c7c5b2"></div>
<div class="t" style="left:188px;top:200.28px;font-size:6.45px;">Дата</div>
<div class="t" style="left:246px;top:200.28px;font-size:6.45px;">Получено</div>
<div class="t" style="left:293px;top:200.28px;font-size:6.45px;">Отправлено</div>
<div class="t" style="left:188px;top:210.18px;font-size:6.45px;">12.04.2006</div>
<div class="t" style="left:246px;top:210.18px;font-size:6.45px;">1.58M</div>
<div class="t" style="left:293px;top:210.18px;font-size:6.45px;">1.39M</div>
<div class="a" style="left:184px;top:217.2px;width:152px;height:1px;background:#ece9d8"></div>
<div class="t" style="left:188px;top:218.98px;font-size:6.45px;">13.04.2006</div>
<div class="t" style="left:246px;top:218.98px;font-size:6.45px;">4.33M</div>
<div class="t" style="left:293px;top:218.98px;font-size:6.45px;">278.45K</div>
<div class="a" style="left:242.3px;top:208.5px;width:1px;height:20px;background:#ece9d8"></div>
<div class="a" style="left:288.5px;top:208.5px;width:1px;height:20px;background:#ece9d8"></div>
<div class="a" style="left:56px;top:227px;width:281px;height:171px;background:linear-gradient(#0a3cd0,#0828b8);border-radius:5px 5px 0 0"></div>
<div class="a" style="left:56px;top:241px;width:2.2px;height:155px;background:linear-gradient(90deg,#1c50d8,#3a72ec)"></div>
<div class="a" style="left:56px;top:227px;width:281px;height:16px;background:linear-gradient(#3a86ff,#0a5cf2 12%,#0052e2 18%,#0052e2 58%,#0862f6 64%,#0862f6 88%,#0040cc 93%);border-radius:5px 5px 0 0"></div>
<div class="t" style="left:60px;top:232.55px;font-size:7.9px;color:#fff;-webkit-text-stroke:0.4px #fff">Скорость пользователя "Пользователь 2"</div>
<div class="a" style="left:295.5px;top:230px;width:11.5px;height:11.5px;background:linear-gradient(135deg,#8ab2fb,#2c6cf0 50%,#1e56d8);border:1px solid #fff;border-radius:2px"></div>
<div class="a" style="left:298.375px;top:237.13px;width:4.0249999999999995px;height:1.84px;background:#fff"></div>
<div class="a" style="left:309px;top:230px;width:11.5px;height:11.5px;background:linear-gradient(135deg,#6f9cf6,#3d6fe0);border:1px solid #fff;border-radius:2px"></div>
<div class="a" style="left:311.875px;top:232.875px;width:5.75px;height:5.75px;border:1px solid rgba(255,255,255,.4);border-top-width:1.5px"></div>
<div class="a" style="left:322.3px;top:230px;width:11.5px;height:11.5px;background:linear-gradient(135deg,#f0a090,#e2502c 45%,#c83010);border:1px solid #fff;border-radius:2px"></div>
<svg class="a" style="left:322.3px;top:230px" width="11.5" height="11.5"><path d="M3.4499999999999997 3.4499999999999997L8.049999999999999 8.049999999999999M8.049999999999999 3.4499999999999997L3.4499999999999997 8.049999999999999" stroke="#fff" stroke-width="1.6"/></svg>
<div class="a" style="left:58px;top:243px;width:277.5px;height:153px;background:#ece9d8;border-left:1px solid #fffcf0;border-bottom:1px solid #fffcf0"></div>
<div class="t" style="left:62.8px;top:251.51px;font-size:6.9px;font-weight:bold;-webkit-text-stroke:0;">Получено</div>
<div class="t" style="left:64.5px;top:262.50px;font-size:6.3px;">лим. скорости</div>
<div class="a" style="left:68.7px;top:270.3px;width:36.2px;height:11.7px;background:#fff;border:1px solid #cdd6e3"></div>
<div class="a" style="left:70.2px;top:271.8px;width:23.200000000000003px;height:8.7px;background:#316ac5"></div>
<div class="t" style="left:71.2px;top:272.95px;font-size:6.3px;color:#fff">2Mb/s</div>
<div class="a" style="left:95.4px;top:271.3px;width:8.5px;height:9.7px;background:linear-gradient(#d8e4fb,#b4c8f4);border-radius:1px"></div>
<svg class="a" style="left:95.4px;top:271.3px" width="8.5" height="9.7"><path d="M2.4 3.8499999999999996L4.25 5.6499999999999995L6.1 3.8499999999999996" fill="none" stroke="#4d6185" stroke-width="1.2"/></svg>
<div class="t" style="left:62.8px;top:299.21px;font-size:6.9px;font-weight:bold;-webkit-text-stroke:0;">Отправлено</div>
<div class="t" style="left:64.5px;top:310.20px;font-size:6.3px;">лим. скорости</div>
<div class="a" style="left:68.7px;top:317.3px;width:36.2px;height:12px;background:#fff;border:1px solid #cdd6e3"></div>
<div class="t" style="left:71.2px;top:320.10px;font-size:6.3px;">200Kb/s</div>
<div class="a" style="left:95.4px;top:318.3px;width:8.5px;height:10px;background:linear-gradient(#d8e4fb,#b4c8f4);border-radius:1px"></div>
<svg class="a" style="left:95.4px;top:318.3px" width="8.5" height="10"><path d="M2.4 4.0L4.25 5.8L6.1 4.0" fill="none" stroke="#4d6185" stroke-width="1.2"/></svg>
<svg class="a" style="left:107.6px;top:248.6px" width="216.4" height="95.4" viewBox="107.6 248.6 216.4 95.4"><rect x="107.6" y="248.6" width="216.4" height="95.4" fill="#000"/><line x1="114.5" y1="248.6" x2="114.5" y2="344" stroke="#34cc92" stroke-width="1"/><line x1="143.5" y1="248.6" x2="143.5" y2="344" stroke="#28a878" stroke-width="1"/><line x1="158.4" y1="248.6" x2="158.4" y2="344" stroke="#34cc92" stroke-width="1"/><line x1="173.1" y1="248.6" x2="173.1" y2="344" stroke="#34cc92" stroke-width="1"/><line x1="187.9" y1="248.6" x2="187.9" y2="344" stroke="#34cc92" stroke-width="1"/><line x1="201.9" y1="248.6" x2="201.9" y2="344" stroke="#34cc92" stroke-width="1"/><line x1="216.7" y1="248.6" x2="216.7" y2="344" stroke="#34cc92" stroke-width="1"/><line x1="245.5" y1="248.6" x2="245.5" y2="344" stroke="#34cc92" stroke-width="1"/><line x1="260" y1="248.6" x2="260" y2="344" stroke="#34cc92" stroke-width="1"/><line x1="274.8" y1="248.6" x2="274.8" y2="344" stroke="#34cc92" stroke-width="1"/><line x1="289" y1="248.6" x2="289" y2="344" stroke="#34cc92" stroke-width="1"/><line x1="304" y1="248.6" x2="304" y2="344" stroke="#34cc92" stroke-width="1"/><line x1="318.8" y1="248.6" x2="318.8" y2="344" stroke="#2a6a50" stroke-width="1"/><path d="M108.5 271.5 H118.5 V277 H119.5 V283.5 H122.6 V271.5 H140.5 V276 M142.5 274 V281.5 H141 M144 272 H165.5 V284 V296 H200.6" fill="none" stroke="#e01010" stroke-width="1"/><path d="M144 272 H150" stroke="#e01010" stroke-width="1.6"/><path d="M114.5 271.5 V284" stroke="#e01010" stroke-width="1.3"/><path d="M114.5 284 V296.5" stroke="#c8a0a0" stroke-width="1"/><path d="M130 271.5 V296.5" stroke="#e02020" stroke-width="1"/><path d="M108.5 332 V339 H116 V340.5 H122 V339.5 H137 V340.5 H143 V338.5 H150 V339.5 H165.5 V344" fill="none" stroke="#e01010" stroke-width="1"/></svg>
<div class="t" style="left:64.6px;top:351.60px;font-size:6.3px;">Скорость получения</div>
<div class="t" style="left:145.7px;top:351.60px;font-size:6.3px;">1.07M</div>
<div class="t" style="left:64.6px;top:364.60px;font-size:6.3px;">Скорость отправления</div>
<div class="t" style="left:145.7px;top:364.60px;font-size:6.3px;">21.08K</div>
<div class="a" style="left:174.5px;top:377.5px;width:42.5px;height:11px;background:linear-gradient(#fff,#f0f0ea 60%,#dcdad0);border:1px solid #7d90b8;border-top-color:#2450a8;border-bottom:1.5px solid #4d6fb0;border-radius:2px"></div>
<div class="t" style="left:174.5px;top:380.75px;width:42.5px;text-align:center;font-size:6.3px">OK</div>
<div class="a" style="left:338.5px;top:157px;width:261.5px;height:258px;background:#7a96df;border-radius:5px 5px 0 0"></div>
<div class="a" style="left:338.5px;top:157px;width:261.5px;height:16.8px;background:linear-gradient(#a2b6ee,#92aaea 12%,#7896e0 18%,#7896e0 58%,#82a6e8 64%,#82a6e8 88%,#6a84e0 93%);border-radius:5px 5px 0 0"></div>
<div class="t" style="left:341.5px;top:161.75px;font-size:7.9px;color:#e4eafa;-webkit-text-stroke:0.2px #e4eafa">Пользователь 2</div>
<div class="a" style="left:556.5px;top:160px;width:11px;height:11px;background:#4a7ae8;border:1px solid rgba(220,230,255,.55);border-radius:2px"></div>
<div class="a" style="left:559.25px;top:166.82px;width:3.8499999999999996px;height:1.76px;background:#fff"></div>
<div class="a" style="left:570px;top:160px;width:11.5px;height:11px;background:#7d98e2;border:1px solid rgba(220,230,255,.55);border-radius:2px"></div>
<div class="a" style="left:572.875px;top:162.75px;width:5.75px;height:5.5px;border:1px solid rgba(255,255,255,.4);border-top-width:1.5px"></div>
<div class="a" style="left:584px;top:160px;width:11px;height:11px;background:#c8707c;border:1px solid rgba(220,230,255,.55);border-radius:2px"></div>
<svg class="a" style="left:584px;top:160px" width="11" height="11"><path d="M3.3 3.3L7.699999999999999 7.699999999999999M7.699999999999999 3.3L3.3 7.699999999999999" stroke="#fff" stroke-width="1.6"/></svg>
<div class="a" style="left:340.1px;top:173.8px;width:256.4px;height:239.2px;background:#ece9d8"></div>
<div class="a" style="left:346px;top:180.5px;width:107.5px;height:38.2px;border:1px solid #d3d0bd;border-radius:3px"></div>
<div class="t" style="left:349.5px;top:177.30px;font-size:6.3px;color:#0046d5;background:#ece9d8;padding:0 1.5px">Сегодня</div>
<div class="a" style="left:346px;top:225px;width:107.5px;height:38.2px;border:1px solid #d3d0bd;border-radius:3px"></div>
<div class="t" style="left:349.5px;top:221.80px;font-size:6.3px;color:#0046d5;background:#ece9d8;padding:0 1.5px">За месяц</div>
<div class="a" style="left:346px;top:269.6px;width:107.5px;height:38px;border:1px solid #d3d0bd;border-radius:3px"></div>
<div class="t" style="left:349.5px;top:266.40px;font-size:6.3px;color:#0046d5;background:#ece9d8;padding:0 1.5px">Всего</div>
<div class="a" style="left:346px;top:317.7px;width:125.2px;height:70.8px;border:1px solid #d3d0bd;border-radius:3px"></div>
<div class="t" style="left:349.5px;top:314.50px;font-size:6.3px;color:#0046d5;background:#ece9d8;padding:0 1.5px">Обнуление трафика</div>
<div class="t" style="left:355.6px;top:189.50px;font-size:6.3px;">Получено</div>
<div class="t" style="left:355.6px;top:204.30px;font-size:6.3px;">Отправлено:</div>
<div class="t" style="left:396.5px;top:189.50px;font-size:6.3px;">105.53M</div>
<div class="t" style="left:396.5px;top:204.30px;font-size:6.3px;">2.51M</div>
<div class="t" style="left:354px;top:234.90px;font-size:6.3px;">Получено</div>
<div class="t" style="left:354px;top:249.70px;font-size:6.3px;">Отправлено:</div>
<div class="t" style="left:397.3px;top:234.90px;font-size:6.3px;">107.23M</div>
<div class="t" style="left:397.3px;top:249.70px;font-size:6.3px;">3.97M</div>
<div class="t" style="left:354px;top:279.20px;font-size:6.3px;">Получено:</div>
<div class="t" style="left:354px;top:294.00px;font-size:6.3px;">Отправлено:</div>
<div class="t" style="left:397.3px;top:279.20px;font-size:6.3px;">107.23M</div>
<div class="t" style="left:397.3px;top:294.00px;font-size:6.3px;">3.97M</div>
<div class="a" style="left:458.6px;top:180.9px;width:131.7px;height:37px;border:1px solid #d3d0bd;border-radius:3px"></div>
<div class="t" style="left:462.1px;top:177.70px;font-size:6.3px;color:#0046d5;background:#ece9d8;padding:0 1.5px">Квота на день</div>
<div class="a" style="left:458.6px;top:226px;width:131.7px;height:37px;border:1px solid #d3d0bd;border-radius:3px"></div>
<div class="t" style="left:462.1px;top:222.80px;font-size:6.3px;color:#0046d5;background:#ece9d8;padding:0 1.5px">Квота на месяц</div>
<div class="a" style="left:458.2px;top:269.2px;width:132.1px;height:37.8px;border:1px solid #d3d0bd;border-radius:3px"></div>
<div class="t" style="left:461.7px;top:266.00px;font-size:6.3px;color:#0046d5;background:#ece9d8;padding:0 1.5px">Квота на весь трафик</div>
<div class="t" style="left:463.8px;top:190.70px;font-size:6.3px;">Входящий трафик</div>
<div class="t" style="left:463.8px;top:205.20px;font-size:6.3px;">Исходящий трафик</div>
<div class="a" style="left:528.2px;top:187.1px;width:45px;height:12.5px;background:#fff;border:1px solid #9fb4d2;border-top-color:#7f9db9"></div>
<div class="t" style="left:530.7px;top:190.15px;font-size:6.3px;">0</div>
<div class="a" style="left:528.2px;top:202.6px;width:45px;height:12.5px;background:#fff;border:1px solid #9fb4d2;border-top-color:#7f9db9"></div>
<div class="t" style="left:530.7px;top:205.65px;font-size:6.3px;">0</div>
<div class="t" style="left:579px;top:191.40px;font-size:6.3px;">Mb</div>
<div class="t" style="left:579px;top:205.90px;font-size:6.3px;">Mb</div>
<div class="t" style="left:463.8px;top:235.80px;font-size:6.3px;">Входящий трафик</div>
<div class="t" style="left:463.8px;top:250.30px;font-size:6.3px;">Исходящий трафик</div>
<div class="a" style="left:528.2px;top:232.2px;width:45px;height:12.5px;background:#fff;border:1px solid #9fb4d2;border-top-color:#7f9db9"></div>
<div class="t" style="left:530.7px;top:235.25px;font-size:6.3px;">0</div>
<div class="a" style="left:528.2px;top:247.7px;width:45px;height:12.5px;background:#fff;border:1px solid #9fb4d2;border-top-color:#7f9db9"></div>
<div class="t" style="left:530.7px;top:250.75px;font-size:6.3px;">0</div>
<div class="t" style="left:579px;top:236.50px;font-size:6.3px;">Mb</div>
<div class="t" style="left:579px;top:251.00px;font-size:6.3px;">Mb</div>
<div class="t" style="left:463.8px;top:279.00px;font-size:6.3px;">Входящий трафик</div>
<div class="t" style="left:463.8px;top:293.50px;font-size:6.3px;">Исходящий трафик</div>
<div class="a" style="left:528.2px;top:275.4px;width:45px;height:12.5px;background:#fff;border:1px solid #9fb4d2;border-top-color:#7f9db9"></div>
<div class="t" style="left:530.7px;top:278.45px;font-size:6.3px;">0</div>
<div class="a" style="left:528.2px;top:290.9px;width:45px;height:12.5px;background:#fff;border:1px solid #9fb4d2;border-top-color:#7f9db9"></div>
<div class="t" style="left:530.7px;top:293.95px;font-size:6.3px;">0</div>
<div class="t" style="left:579px;top:279.70px;font-size:6.3px;">Mb</div>
<div class="t" style="left:579px;top:294.20px;font-size:6.3px;">Mb</div>
<div class="t" style="left:457.3px;top:308.30px;font-size:6.3px;color:#0046d5">* 0 - трафик неограничен</div>
<div class="t" style="left:354px;top:329.80px;font-size:6.3px;">С:</div>
<div class="t" style="left:354px;top:347.50px;font-size:6.3px;">По</div>
<div class="a" style="left:378px;top:326px;width:87.5px;height:13.3px;background:#fff;border:1px solid #7f9db9"></div>
<div class="t" style="left:381px;top:330.25px;font-size:6.3px;letter-spacing:0.18px">13&nbsp; апреля &nbsp;2006 г.</div>
<div class="a" style="left:455.7px;top:327.2px;width:8.6px;height:10.9px;background:linear-gradient(#dbe6fc,#b9ccf4);border-radius:1px"></div>
<svg class="a" style="left:455.7px;top:327.2px" width="8.6" height="10.9"><path d="M2.4 3.95L4.3 5.95L6.2 3.95" fill="none" stroke="#4d6185" stroke-width="1.2"/></svg>
<div class="a" style="left:378px;top:344px;width:87.5px;height:13px;background:#fff;border:1px solid #7f9db9"></div>
<div class="t" style="left:381px;top:348.10px;font-size:6.3px;letter-spacing:0.18px">13&nbsp; апреля &nbsp;2006 г.</div>
<div class="a" style="left:455.7px;top:345.2px;width:8.6px;height:10.6px;background:linear-gradient(#dbe6fc,#b9ccf4);border-radius:1px"></div>
<svg class="a" style="left:455.7px;top:345.2px" width="8.6" height="10.6"><path d="M2.4 3.8L4.3 5.8L6.2 3.8" fill="none" stroke="#4d6185" stroke-width="1.2"/></svg>
<div class="t" style="left:354px;top:361.00px;font-size:6.3px;color:#0046d5">* выбранные даты входят в диапазон</div>
<div class="a" style="left:423px;top:371.8px;width:42px;height:11.2px;background:linear-gradient(#fff,#f0f0ea 60%,#dcdad0);border:1px solid #7d90b8;border-top-color:#2450a8;border-bottom:1.5px solid #4d6fb0;border-radius:2px"></div>
<div class="t" style="left:423px;top:375.15px;width:42px;text-align:center;font-size:6.3px">Обнулить</div>
<div class="a" style="left:488.3px;top:319.2px;width:91.7px;height:12px;background:linear-gradient(#fff,#f0f0ea 60%,#dcdad0);border:1px solid #7d90b8;border-top-color:#2450a8;border-bottom:1.5px solid #4d6fb0;border-radius:2px"></div>
<div class="t" style="left:488.3px;top:322.95px;width:91.7px;text-align:center;font-size:6.3px">Расписание работы</div>
<div class="a" style="left:488.3px;top:341.7px;width:91.7px;height:12px;background:linear-gradient(#fff,#f0f0ea 60%,#dcdad0);border:1px solid #7d90b8;border-top-color:#2450a8;border-bottom:1.5px solid #4d6fb0;border-radius:2px"></div>
<div class="t" style="left:488.3px;top:345.45px;width:91.7px;text-align:center;font-size:6.3px">Статистика по дням</div>
<div class="a" style="left:488.3px;top:374.4px;width:91.5px;height:12.2px;background:linear-gradient(#eeeee8,#dedcd4);border:1px solid #7d90b8;border-top-color:#2450a8;border-bottom:1.5px solid #4d6fb0;border-radius:2px"></div>
<div class="t" style="left:488.3px;top:378.25px;width:91.5px;text-align:center;font-size:6.3px">Ограничения пользователя</div>
<div class="a" style="left:419px;top:397.2px;width:42.8px;height:11.8px;background:linear-gradient(#fff,#f0f0ea 60%,#dcdad0);border:1px solid #7d90b8;border-top-color:#2450a8;border-bottom:1.5px solid #4d6fb0;border-radius:2px"></div>
<div class="t" style="left:419px;top:400.85px;width:42.8px;text-align:center;font-size:6.3px">OK</div>
<div class="a" style="left:473.7px;top:397.2px;width:43.3px;height:11.8px;background:linear-gradient(#fff,#f0f0ea 60%,#dcdad0);border:1px solid #7d90b8;border-top-color:#2450a8;border-bottom:1.5px solid #4d6fb0;border-radius:2px"></div>
<div class="t" style="left:473.7px;top:400.85px;width:43.3px;text-align:center;font-size:6.3px">Cancel</div>
</body></html>
